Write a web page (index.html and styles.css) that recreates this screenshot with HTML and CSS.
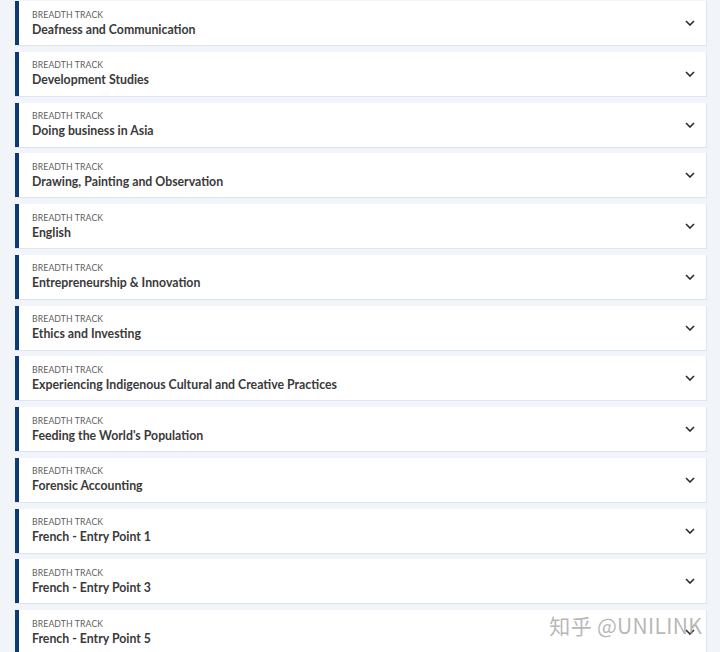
FILE: index.html
```html
<!DOCTYPE html>
<html>

<head>
    <title>Breadth Tracks</title>
    <meta name="viewport" content="width=device-width, initial-scale=1" charset="UTF-8">
    <link rel="stylesheet" href="styles.css">
</head>

<body>
    <ul class="tracks">
        <li class="track">
            <div class="track-text">
                <span class="kicker">BREADTH TRACK</span>
                <span class="name">Deafness and Communication</span>
            </div>
            <svg class="chev" viewBox="0 0 10 6"><path d="M1 1l4 4 4-4"/></svg>
        </li>
        <li class="track">
            <div class="track-text">
                <span class="kicker">BREADTH TRACK</span>
                <span class="name">Development Studies</span>
            </div>
            <svg class="chev" viewBox="0 0 10 6"><path d="M1 1l4 4 4-4"/></svg>
        </li>
        <li class="track">
            <div class="track-text">
                <span class="kicker">BREADTH TRACK</span>
                <span class="name">Doing business in Asia</span>
            </div>
            <svg class="chev" viewBox="0 0 10 6"><path d="M1 1l4 4 4-4"/></svg>
        </li>
        <li class="track">
            <div class="track-text">
                <span class="kicker">BREADTH TRACK</span>
                <span class="name">Drawing, Painting and Observation</span>
            </div>
            <svg class="chev" viewBox="0 0 10 6"><path d="M1 1l4 4 4-4"/></svg>
        </li>
        <li class="track">
            <div class="track-text">
                <span class="kicker">BREADTH TRACK</span>
                <span class="name">English</span>
            </div>
            <svg class="chev" viewBox="0 0 10 6"><path d="M1 1l4 4 4-4"/></svg>
        </li>
        <li class="track">
            <div class="track-text">
                <span class="kicker">BREADTH TRACK</span>
                <span class="name">Entrepreneurship &amp; Innovation</span>
            </div>
            <svg class="chev" viewBox="0 0 10 6"><path d="M1 1l4 4 4-4"/></svg>
        </li>
        <li class="track">
            <div class="track-text">
                <span class="kicker">BREADTH TRACK</span>
                <span class="name">Ethics and Investing</span>
            </div>
            <svg class="chev" viewBox="0 0 10 6"><path d="M1 1l4 4 4-4"/></svg>
        </li>
        <li class="track">
            <div class="track-text">
                <span class="kicker">BREADTH TRACK</span>
                <span class="name">Experiencing Indigenous Cultural and Creative Practices</span>
            </div>
            <svg class="chev" viewBox="0 0 10 6"><path d="M1 1l4 4 4-4"/></svg>
        </li>
        <li class="track">
            <div class="track-text">
                <span class="kicker">BREADTH TRACK</span>
                <span class="name">Feeding the World's Population</span>
            </div>
            <svg class="chev" viewBox="0 0 10 6"><path d="M1 1l4 4 4-4"/></svg>
        </li>
        <li class="track">
            <div class="track-text">
                <span class="kicker">BREADTH TRACK</span>
                <span class="name">Forensic Accounting</span>
            </div>
            <svg class="chev" viewBox="0 0 10 6"><path d="M1 1l4 4 4-4"/></svg>
        </li>
        <li class="track">
            <div class="track-text">
                <span class="kicker">BREADTH TRACK</span>
                <span class="name">French - Entry Point 1</span>
            </div>
            <svg class="chev" viewBox="0 0 10 6"><path d="M1 1l4 4 4-4"/></svg>
        </li>
        <li class="track">
            <div class="track-text">
                <span class="kicker">BREADTH TRACK</span>
                <span class="name">French - Entry Point 3</span>
            </div>
            <svg class="chev" viewBox="0 0 10 6"><path d="M1 1l4 4 4-4"/></svg>
        </li>
        <li class="track">
            <div class="track-text">
                <span class="kicker">BREADTH TRACK</span>
                <span class="name">French - Entry Point 5</span>
            </div>
            <svg class="chev" viewBox="0 0 10 6"><path d="M1 1l4 4 4-4"/></svg>
            <span class="watermark">知乎 @UNILINK</span>
        </li>
    </ul>
</body>

</html>
```

FILE: styles.css
```css
html,
body {
    margin: 0;
    padding: 0;
    background-color: #f1f4f8;
    font-family: "Lato", "Liberation Sans", sans-serif;
}

.tracks {
    list-style-type: none;
    margin: 0;
    padding: 1px 13px 0 15px;
}

.track {
    position: relative;
    display: flex;
    align-items: center;
    height: 44px;
    margin-bottom: 6.75px;
    background-color: #ffffff;
    border-left: 4px solid #0c3b73;
    border-right: 1px solid #e2e7ee;
    box-shadow: 0 1px 0 #dde4ed;
    box-sizing: border-box;
}

.track-text {
    flex: 1;
    display: flex;
    flex-direction: column;
    padding-left: 13px;
}

.kicker {
    font-size: 8.7px;
    color: #606060;
    letter-spacing: 0.1px;
    line-height: 13px;
}

.name {
    font-size: 12.3px;
    font-weight: bold;
    color: #3a3a3a;
    line-height: 18px;
}

.chev {
    width: 10px;
    height: 6px;
    margin-right: 11px;
    fill: none;
    stroke: #2b2b2b;
    stroke-width: 1.6;
}

.watermark {
    position: absolute;
    right: 4px;
    top: 0;
    font-family: "Noto Sans CJK SC", "Liberation Sans", sans-serif;
    font-size: 21px;
    color: rgba(160, 160, 160, 0.75);
    letter-spacing: 0.3px;
}
```
